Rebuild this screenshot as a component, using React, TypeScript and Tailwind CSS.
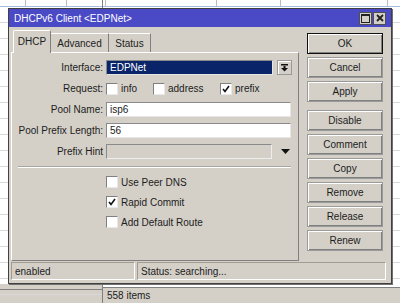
import React from 'react';

const face = 'bg-[#d4d0c8]';

const Check = ({ checked }: { checked?: boolean }) => (
  <span className="flex h-[12px] w-[12px] shrink-0 items-center justify-center border-t border-l border-t-[#808080] border-l-[#808080] border-b border-r border-b-[#e8e8e8] border-r-[#e8e8e8] bg-white">
    {checked && (
      <svg width="8" height="8" viewBox="0 0 8 8">
        <path d="M1 4 L3 6.5 L7 1" stroke="#111" strokeWidth="1.6" fill="none" />
      </svg>
    )}
  </span>
);

const Field = ({ value, width }: { value: string; width: string }) => (
  <div
    className={`${width} h-[15px] border border-t-[#8a8a8a] border-l-[#8a8a8a] border-b-[#e6e6e6] border-r-[#e6e6e6] bg-white pl-[3px] leading-[13px]`}
  >
    {value}
  </div>
);

const Btn = ({ label, primary }: { label: string; primary?: boolean }) => (
  <div
    className={`h-[21px] w-[76px] ${face} flex items-center justify-center border ${
      primary ? 'border-[#111]' : 'border-[#9a9a9a]'
    } shadow-[inset_1px_1px_0_#fff,inset_-1px_-1px_0_#808080]`}
  >
    {label}
  </div>
);

const Label = ({ text }: { text: string }) => (
  <span className="w-[94px] shrink-0 pr-[3px] text-right">{text}</span>
);

const Dialog = () => (
  <div className="absolute left-[8px] top-[8px] flex h-[276px] w-[384px] flex-col border border-[#404040] bg-[#d4d0c8] shadow-[1px_1px_0_#707070]">
    <div className="flex h-[18px] shrink-0 items-center justify-between bg-[#4a4ac6] pl-[5px] pr-[5px] text-white">
      <span>DHCPv6 Client &lt;EDPNet&gt;</span>
      <div className="flex gap-[1px]">
        <span className="flex h-[13px] w-[13px] items-center justify-center border border-[#505050] bg-[#d4d0c8]">
          <svg width="9" height="9" viewBox="0 0 9 9">
            <rect x="0.5" y="0.5" width="8" height="8" fill="none" stroke="#222" />
            <rect x="0" y="0" width="9" height="2" fill="#222" />
          </svg>
        </span>
        <span className="flex h-[13px] w-[13px] items-center justify-center border border-[#505050] bg-[#d4d0c8]">
          <svg width="8" height="8" viewBox="0 0 8 8">
            <path d="M1 1 L7 7 M7 1 L1 7" stroke="#222" strokeWidth="1.8" />
          </svg>
        </span>
      </div>
    </div>

    <div className="flex h-[234px] shrink-0 pl-[2px]">
      <div className="flex w-[288px] flex-col">
        <div className="flex h-[25px] items-end pl-[2px]">
          <div className="relative z-10 -mb-px flex h-[23px] w-[38px] items-center justify-center rounded-t-[2px] border-t border-l border-r border-t-white border-l-white border-r-[#808080] bg-[#d4d0c8] pb-[2px]">
            DHCP
          </div>
          <div className="flex h-[19px] w-[58px] items-center justify-center border-t border-r border-t-white border-r-[#808080] bg-[#d4d0c8]">
            Advanced
          </div>
          <div className="flex h-[19px] w-[42px] items-center justify-center border-t border-r border-t-white border-r-[#808080] bg-[#d4d0c8]">
            Status
          </div>
        </div>
        <div className="flex h-[209px] flex-col border border-t-white border-l-white border-b-[#808080] border-r-[#808080] pt-[7px]">
          <div className="flex flex-col gap-[6px]">
            <div className="flex h-[15px] items-center">
              <Label text="Interface:" />
              <div className="h-[15px] w-[167px] border border-t-[#8a8a8a] border-l-[#8a8a8a] border-b-[#e6e6e6] border-r-[#e6e6e6] bg-[#0a246a] pl-[3px] leading-[13px] text-white">
                EDPNet
              </div>
              <div className="ml-[4px] flex h-[15px] w-[15px] items-center justify-center border border-[#9a9a9a] shadow-[inset_1px_1px_0_#fff]">
                <svg width="7" height="8" viewBox="0 0 7 8">
                  <rect x="0" y="0" width="7" height="1.5" fill="#111" />
                  <rect x="2.5" y="2" width="2" height="2" fill="#111" />
                  <path d="M0 4 L7 4 L3.5 7.5 Z" fill="#111" />
                </svg>
              </div>
            </div>
            <div className="flex h-[15px] items-center">
              <Label text="Request:" />
              <div className="flex w-[47px] items-center gap-[3px]">
                <Check />
                <span>info</span>
              </div>
              <div className="flex w-[67px] items-center gap-[3px]">
                <Check />
                <span>address</span>
              </div>
              <div className="flex items-center gap-[3px]">
                <Check checked />
                <span>prefix</span>
              </div>
            </div>
            <div className="flex h-[15px] items-center">
              <Label text="Pool Name:" />
              <Field value="isp6" width="w-[185px]" />
            </div>
            <div className="flex h-[15px] items-center">
              <Label text="Pool Prefix Length:" />
              <Field value="56" width="w-[185px]" />
            </div>
            <div className="flex h-[15px] items-center">
              <Label text="Prefix Hint" />
              <div className="h-[15px] w-[166px] border border-t-[#8a8a8a] border-l-[#8a8a8a] border-b-[#eeeeee] border-r-[#eeeeee] bg-[#d4d0c8]" />
              <svg className="ml-[9px]" width="9" height="5" viewBox="0 0 9 5">
                <path d="M0 0 L9 0 L4.5 5 Z" fill="#111" />
              </svg>
            </div>
          </div>
          <div className="ml-[6px] mt-[7px] h-[2px] w-[273px] border-t border-b border-t-[#a8a6a0] border-b-white" />
          <div className="mt-[8px] flex flex-col gap-[8px] pl-[94px]">
            <div className="flex h-[12px] items-center gap-[3px]">
              <Check />
              <span>Use Peer DNS</span>
            </div>
            <div className="flex h-[12px] items-center gap-[3px]">
              <Check checked />
              <span>Rapid Commit</span>
            </div>
            <div className="flex h-[12px] items-center gap-[3px]">
              <Check />
              <span>Add Default Route</span>
            </div>
          </div>
        </div>
      </div>

      <div className="ml-[8px] flex flex-col pt-[6px]">
        <div className="flex flex-col gap-[3px]">
          <Btn label="OK" primary />
          <Btn label="Cancel" />
          <Btn label="Apply" />
        </div>
        <div className="mt-[8px] flex flex-col gap-[3px]">
          <Btn label="Disable" />
          <Btn label="Comment" />
          <Btn label="Copy" />
          <Btn label="Remove" />
          <Btn label="Release" />
          <Btn label="Renew" />
        </div>
      </div>
    </div>

    <div className="mt-[1px] flex h-[18px] shrink-0 gap-[2px] pl-[2px]">
      <div className="flex w-[124px] items-center border border-t-[#a09c94] border-l-[#a09c94] border-b-white border-r-white pl-[3px]">
        enabled
      </div>
      <div className="flex w-[249px] items-center border border-t-[#a09c94] border-l-[#a09c94] border-b-white border-r-white pl-[3px]">
        Status: searching...
      </div>
    </div>
  </div>
);

const rows = Array.from({ length: 18 });

export default function App() {
  return (
    <div className="relative h-[303px] w-[400px] overflow-hidden bg-[#d4d0c8] font-['Liberation_Sans',Arial,sans-serif] text-[10px] text-[#1c1c1c]">
      <div className="flex h-full">
        <div className="flex w-[103px] flex-col border-r border-[#808080]">
          <div className="flex h-[284px] flex-col bg-white">
            <div className="flex h-[7px] shrink-0 border-b border-[#a8bce0]">
              <div className="w-[26px] border-r border-[#bdbdbd]" />
              <div className="w-[41px] border-r border-[#bdbdbd]" />
            </div>
            {rows.map((_, i) => (
              <div key={i} className="h-[16px] shrink-0 border-b border-[#d8d8d8]" />
            ))}
          </div>
          <div className="mt-[5px] border-t border-[#808080]" />
        </div>
        <div className="flex flex-1 flex-col">
          <div className="flex h-[290px] flex-col overflow-hidden bg-white">
            <div className="flex h-[7px] shrink-0 border-b border-[#a8bce0]">
              <div className="w-[3px] border-r border-[#bdbdbd]" />
              <div className="w-[111px] border-r border-[#bdbdbd]" />
              <div className="w-[64px] border-r border-[#bdbdbd]" />
              <div className="w-[107px] border-r border-[#bdbdbd]" />
            </div>
            {rows.map((_, i) => (
              <div key={i} className="h-[16px] shrink-0 border-b border-[#d8d8d8]" />
            ))}
          </div>
          <div className="flex flex-1 items-center border-t border-[#808080] pl-[4px]">558 items</div>
        </div>
      </div>
      <Dialog />
    </div>
  );
}
